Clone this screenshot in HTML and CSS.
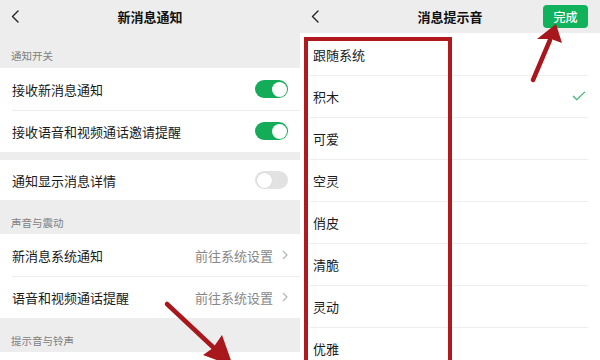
FILE: index.html
```html
<!DOCTYPE html>
<html lang="zh-CN">
<head>
<meta charset="utf-8">
<title>新消息通知</title>
<link rel="stylesheet" href="styles.css">
</head>
<body>
<div class="screen">
  <section class="panel left">
    <header class="nav">
      <svg class="back" viewBox="0 0 8 13"><polyline points="7,1 1.5,6.5 7,12" /></svg>
      <h1>新消息通知</h1>
      <span></span>
    </header>
    <div class="label">通知开关</div>
    <div class="group">
      <div class="row"><span>接收新消息通知</span><span class="switch on"><i></i></span></div>
      <div class="row"><span>接收语音和视频通话邀请提醒</span><span class="switch on"><i></i></span></div>
    </div>
    <div class="gap"></div>
    <div class="group">
      <div class="row short"><span>通知显示消息详情</span><span class="switch off"><i></i></span></div>
    </div>
    <div class="label">声音与震动</div>
    <div class="group">
      <div class="row"><span>新消息系统通知</span><span class="value">前往系统设置<svg class="chev" viewBox="0 0 6 10"><polyline points="1,1 5,5 1,9" /></svg></span></div>
      <div class="row"><span>语音和视频通话提醒</span><span class="value">前往系统设置<svg class="chev" viewBox="0 0 6 10"><polyline points="1,1 5,5 1,9" /></svg></span></div>
    </div>
    <div class="label">提示音与铃声</div>
    <div class="group">
      <div class="row"></div>
    </div>
  </section>

  <section class="panel right">
    <header class="nav">
      <svg class="back" viewBox="0 0 8 13"><polyline points="7,1 1.5,6.5 7,12" /></svg>
      <h1>消息提示音</h1>
      <span class="done">完成</span>
    </header>
    <ul class="list">
      <li class="item">跟随系统</li>
      <li class="item">积木<svg class="check" viewBox="0 0 15 11"><polyline points="1,5.5 5,9.5 14,1" /></svg></li>
      <li class="item">可爱</li>
      <li class="item">空灵</li>
      <li class="item">俏皮</li>
      <li class="item">清脆</li>
      <li class="item">灵动</li>
      <li class="item">优雅</li>
    </ul>
  </section>

  <div class="redbox"></div>

  <svg class="arrows" viewBox="0 0 600 360">
    <line x1="167" y1="304" x2="215" y2="349" class="shaft" />
    <polygon points="233,366 203,355 213,348 222,335" class="head" />
    <line x1="533" y1="80" x2="550" y2="40" class="shaft" />
    <polygon points="556,24 562,43 551,39 537,39" class="head" />
  </svg>
</div>
</body>
</html>
```

FILE: styles.css
```css
html, body {
  margin: 0;
  padding: 0;
}

body {
  width: 600px;
  height: 360px;
  overflow: hidden;
  font-family: "Noto Sans CJK SC", "Noto Sans", sans-serif;
  color: #1a1a1a;
}

.screen {
  position: relative;
  display: flex;
  width: 600px;
  height: 360px;
  overflow: hidden;
}

.panel {
  width: 300px;
  flex: none;
  height: 360px;
  overflow: hidden;
}

.left {
  background: #ededed;
}

.right {
  background: #ffffff;
}

.nav {
  height: 33px;
  display: grid;
  grid-template-columns: 1fr auto 1fr;
  align-items: center;
  background: #ededed;
}

.nav h1 {
  margin: 0;
  font-size: 13px;
  font-weight: 600;
  color: #111;
  line-height: 1;
}

.back {
  justify-self: start;
  margin-left: 11px;
  width: 8px;
  height: 13px;
  fill: none;
  stroke: #222;
  stroke-width: 1.4;
  stroke-linecap: round;
  stroke-linejoin: round;
}

.done {
  justify-self: end;
  margin-right: 12px;
  width: 45px;
  height: 23px;
  border-radius: 4px;
  background: #11b25c;
  color: #fff;
  font-size: 12px;
  font-weight: 500;
  display: flex;
  align-items: center;
  justify-content: center;
  line-height: 1;
}

.label {
  height: 35px;
  box-sizing: border-box;
  padding: 16px 0 0 11px;
  font-size: 10.5px;
  line-height: 14px;
  color: #808080;
}

.label + .group + .label,
.gap + .group + .label {
  height: 34px;
}

.group {
  background: #fff;
}

.row {
  height: 42px;
  box-sizing: border-box;
  display: flex;
  align-items: center;
  justify-content: space-between;
  padding: 0 12px;
  font-size: 13px;
  line-height: 1;
  background: #fff;
}

.row + .row {
  background: linear-gradient(#ececec, #ececec) 12px 0 / 100% 1px no-repeat, #fff;
}

.row.short {
  height: 40px;
}

.gap {
  height: 8px;
}

.switch {
  width: 33px;
  height: 18px;
  box-sizing: border-box;
  border-radius: 9px;
  padding: 1.5px;
  display: flex;
}

.switch i {
  width: 15px;
  height: 15px;
  border-radius: 50%;
  background: #fff;
}

.switch.on {
  background: #14ac58;
  justify-content: flex-end;
}

.switch.off {
  background: #e2e2e2;
  justify-content: flex-start;
}

.switch.off i {
  box-shadow: 0 0 0 0.5px #d6d6d6;
}

.value {
  display: flex;
  align-items: center;
  gap: 9px;
  color: #888;
  font-size: 13px;
}

.chev {
  width: 6px;
  height: 10px;
  fill: none;
  stroke: #b5b5b5;
  stroke-width: 1.2;
}

.list {
  list-style: none;
  margin: 0;
  padding: 0;
}

.item {
  height: 42px;
  box-sizing: border-box;
  padding: 0 14px 0 13px;
  display: flex;
  align-items: center;
  justify-content: space-between;
  font-size: 13px;
  line-height: 1;
}

.item + .item {
  background: linear-gradient(#eeeeee, #eeeeee) 10px 0 / calc(100% - 22px) 1px no-repeat;
}

.check {
  width: 14px;
  height: 10px;
  fill: none;
  stroke: #3cb371;
  stroke-width: 1.4;
}

.redbox {
  position: absolute;
  left: 304px;
  top: 37px;
  width: 148px;
  height: 340px;
  box-sizing: border-box;
  border: 4.5px solid #b0191d;
}

.arrows {
  position: absolute;
  left: 0;
  top: 0;
  width: 600px;
  height: 360px;
  pointer-events: none;
}

.arrows .shaft {
  stroke: #a8171b;
  stroke-width: 4.5;
  stroke-linecap: round;
}

.arrows .head {
  fill: #a8171b;
}
```
